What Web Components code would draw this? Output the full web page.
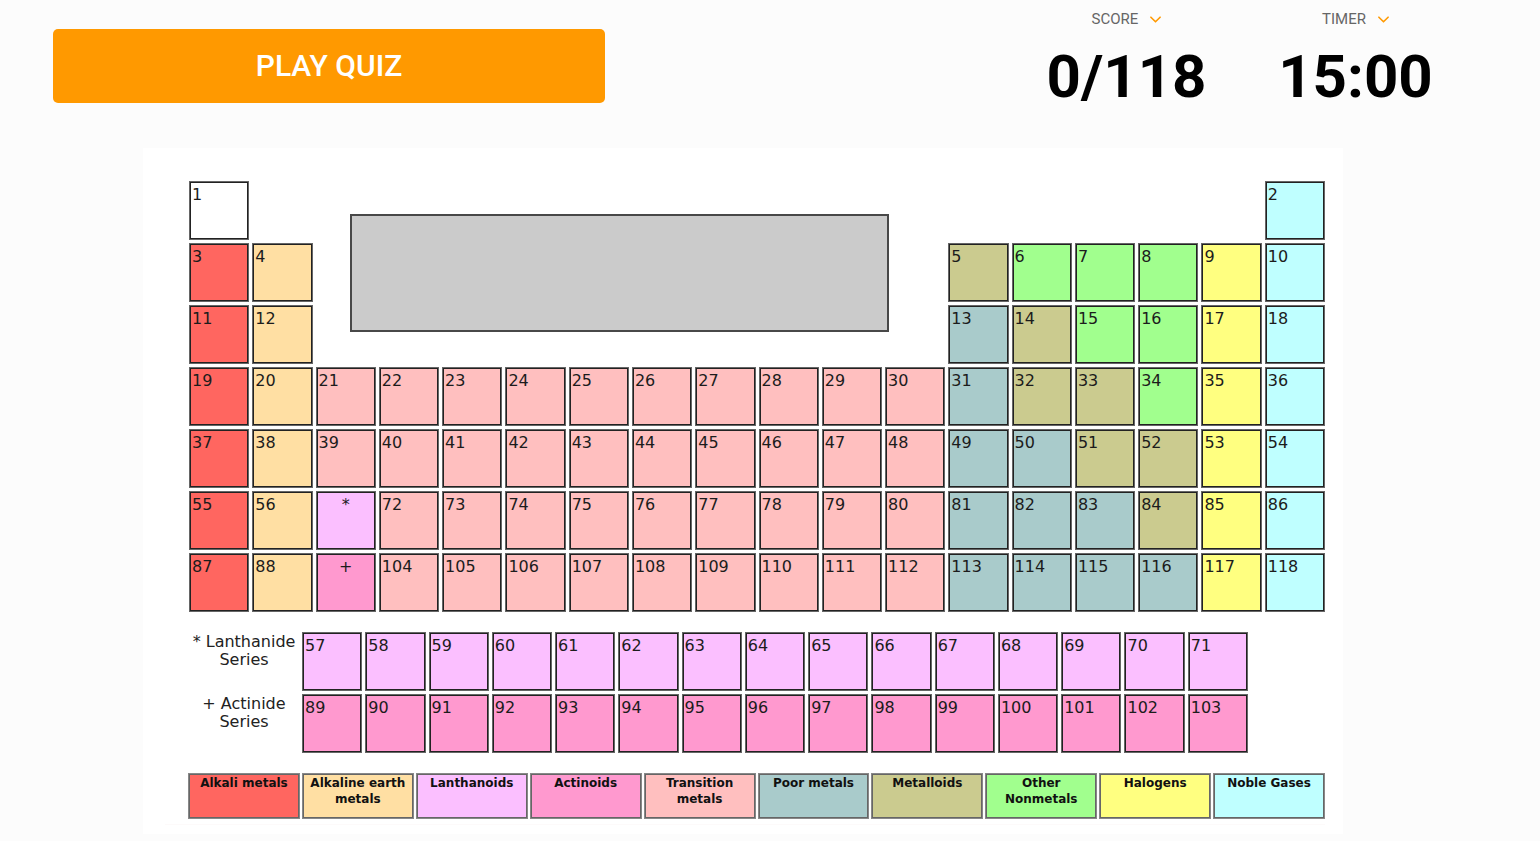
<!DOCTYPE html>
<html lang="en">
<head>
<meta charset="utf-8">
<title>Periodic Table Quiz</title>
<style>
  body { margin: 0; background: #fcfcfc; color: #000; font-family: Roboto, "Liberation Sans", sans-serif; }
</style>
</head>
<body>
<quiz-page>
  <quiz-header slot="header">
    <play-button>PLAY QUIZ</play-button>
    <quiz-stat slot="stats" label="SCORE">0/118</quiz-stat>
    <quiz-stat slot="stats" label="TIMER">15:00</quiz-stat>
  </quiz-header>
  <periodic-board></periodic-board>
</quiz-page>

<script>
class BaseElement extends HTMLElement {
  render(html) {
    const template = document.createElement('template');
    template.innerHTML = html;
    this.attachShadow({ mode: 'open' }).append(template.content.cloneNode(true));
  }
}

customElements.define('quiz-page', class extends BaseElement {
  connectedCallback() {
    this.render(`
      <style>
        :host { display: block; }
        main { padding: 0 107px 0 53px; }
      </style>
      <slot name="header"></slot>
      <main><slot></slot></main>`);
  }
});

customElements.define('quiz-header', class extends BaseElement {
  connectedCallback() {
    this.render(`
      <style>
        :host { display: block; }
        header { display: flex; justify-content: space-between; min-height: 148px; padding: 0 70px 0 53px; box-sizing: border-box; }
        .action { flex: 0 1 552px; padding-top: 29px; }
        .stats { flex: 0 1 458px; display: grid; grid-template-columns: 1fr 1fr; padding-top: 9px; }
      </style>
      <header>
        <div class="action"><slot></slot></div>
        <div class="stats"><slot name="stats"></slot></div>
      </header>`);
  }
});

customElements.define('play-button', class extends BaseElement {
  connectedCallback() {
    this.render(`
      <style>
        :host { display: block; }
        button { display: block; width: 100%; height: 74px; padding: 0; border: 0; border-radius: 5px;
          background: #ff9900; color: #fff; font: 500 30px/74px Roboto, sans-serif; cursor: pointer; }
      </style>
      <button type="button"><slot></slot></button>`);
  }
});

customElements.define('quiz-stat', class extends BaseElement {
  connectedCallback() {
    this.render(`
      <style>
        :host { display: flex; flex-direction: column; align-items: center; }
        button { display: flex; align-items: center; gap: 12px; padding: 0; border: 0; background: none;
          color: #666; font: 400 15px/20px Roboto, sans-serif; cursor: pointer; }
        svg { display: block; width: 11px; height: 7px; }
        .value { font: 700 60px/70px Roboto, sans-serif; padding-top: 13px; }
      </style>
      <button type="button"><span>${this.getAttribute('label')}</span>
        <svg viewBox="0 0 11 7" fill="none" stroke="#ff9900" stroke-width="1.6" stroke-linecap="round" stroke-linejoin="round" aria-hidden="true"><path d="M.9 1.200l4.600 4.600 4.600-4.600"/></svg>
      </button>
      <div class="value"><slot></slot></div>`);
  }
});

const FILL = {
  h: '#ffffff', a: '#ff6660', e: '#ffdfa3', l: '#fbbfff', c: '#ff99cf', t: '#ffbfbf',
  p: '#a9cbcb', m: '#cbcb8f', n: '#a1ff8e', y: '#ffff80', g: '#bfffff'
};

customElements.define('element-cell', class extends BaseElement {
  connectedCallback() {
    this.render(`
      <style>
        :host { display: block; box-sizing: border-box; min-width: 0; border: 1px solid #666;
          box-shadow: inset 0 0 0 1px #222;
          background: ${FILL[this.getAttribute('kind')]}; color: #1c1c1c;
          font: 16px/20px "DejaVu Sans", sans-serif; padding: 3px 0 0 2px; }
        :host([marker]) { text-align: center; padding-left: 0; }
      </style>
      <slot></slot>`);
  }
});

customElements.define('legend-item', class extends BaseElement {
  connectedCallback() {
    this.render(`
      <style>
        :host { display: block; box-sizing: border-box; min-width: 0; border: 1px solid #888;
          box-shadow: inset 0 0 0 1px #666;
          background: ${FILL[this.getAttribute('kind')]}; color: #111; padding-top: 1px;
          font: bold 12px/16px "DejaVu Sans", sans-serif; text-align: center; }
      </style>
      <slot></slot>`);
  }
});

/* Each row: [first column, first atomic number, kinds]. */
const ROWS = [
  [[1, 1, 'h'], [18, 2, 'g']],
  [[1, 3, 'ae'], [13, 5, 'mnnnyg']],
  [[1, 11, 'ae'], [13, 13, 'pmnnyg']],
  [[1, 19, 'aettttttttttpmmnyg']],
  [[1, 37, 'aettttttttttppmmyg']],
  [[1, 55, 'ae'], [3, '*', 'l'], [4, 72, 'tttttttttpppmyg']],
  [[1, 87, 'ae'], [3, '+', 'c'], [4, 104, 'tttttttttppppyg']]
];
const LEGEND = [
  ['a', 'Alkali metals'], ['e', 'Alkaline earth metals'], ['l', 'Lanthanoids'], ['c', 'Actinoids'],
  ['t', 'Transition metals'], ['p', 'Poor metals'], ['m', 'Metalloids'], ['n', 'Other Nonmetals'],
  ['y', 'Halogens'], ['g', 'Noble Gases']
];

customElements.define('periodic-board', class extends BaseElement {
  connectedCallback() {
    const cells = ROWS.map((row, r) => row.map(([col, first, kinds]) =>
      [...kinds].map((kind, i) => {
        const marker = typeof first === 'string';
        return `<element-cell kind="${kind}"${marker ? ' marker' : ''} style="grid-area:${r + 1}/${col + i}">${marker ? first : first + i}</element-cell>`;
      }).join('')).join('')).join('');
    const series = (first, kind) => Array.from({ length: 15 }, (_, i) =>
      `<element-cell kind="${kind}">${first + i}</element-cell>`).join('');
    this.render(`
      <style>
        :host { display: block; box-sizing: border-box; max-width: 1200px; margin: 0 auto;
          padding: 33px 18px 9px 46px; background: #fff; }
        .table { display: grid; grid-template-columns: repeat(18, minmax(0, 1fr)); grid-auto-rows: 59px; gap: 3px; }
        .answer { grid-area: 1 / 3 / 4 / 13; margin: 33px 56px 32px 34px; border: 2px solid #484848; background: #cbcbcb; }
        .series { display: grid; grid-template-columns: 110px minmax(0, 1fr); gap: 3px; margin: 20px 77px 20px 0; }
        .label { padding-top: 1px; text-align: center; color: #222; font: 16px/18px "DejaVu Sans", sans-serif; }
        .run { display: grid; grid-template-columns: repeat(15, minmax(0, 1fr)); grid-auto-rows: 59px; gap: 3px; }
        .legend { display: grid; grid-template-columns: repeat(10, minmax(0, 1fr)); grid-auto-rows: 46px; gap: 2px; margin-left: -1px; }
        .edge { height: 0; margin: 5px 0 0 -24px; border: 0; border-top: 1px solid #fdfafa; }
      </style>
      <div class="table">${cells}<div class="answer"></div></div>
      <div class="series">
        <div class="label">* Lanthanide<br>Series</div><div class="run">${series(57, 'l')}</div>
        <div class="label">+ Actinide<br>Series</div><div class="run">${series(89, 'c')}</div>
      </div>
      <div class="legend">${LEGEND.map(([k, t]) => `<legend-item kind="${k}">${t}</legend-item>`).join('')}</div>
      <hr class="edge">`);
  }
});
</script>
</body>
</html>
